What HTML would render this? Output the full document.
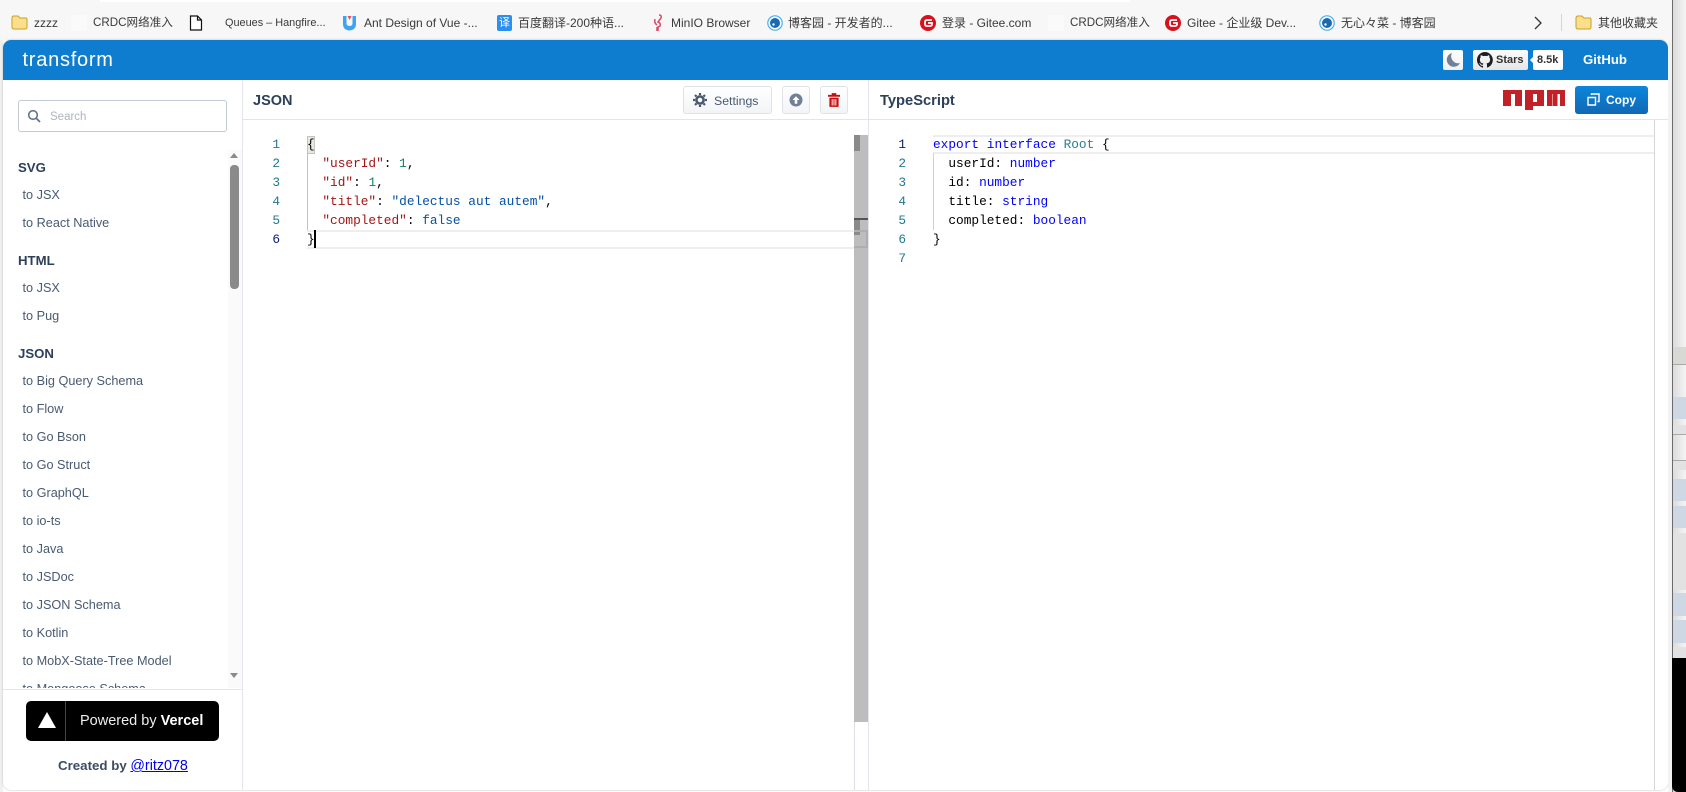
<!DOCTYPE html>
<html lang="en"><head><meta charset="utf-8"><title>transform</title>
<style>
html,body{margin:0;padding:0;width:1686px;height:792px;overflow:hidden;background:#fff;font-family:"Liberation Sans","Noto Sans CJK SC",sans-serif}
.a{position:absolute}
.t{position:absolute;white-space:nowrap}
.bm{position:absolute;top:15px;font-size:12px;line-height:16px;color:#3a3a3a;white-space:nowrap}
.h{position:absolute;left:18px;font-size:13.2px;line-height:18px;font-weight:700;color:#2d3f5b}
.l{position:absolute;left:22px;font-size:12.7px;line-height:16px;color:#4a5a72;white-space:nowrap}
.btn{position:absolute;top:86px;height:26px;border:1px solid #dfe3e9;border-radius:3px;background:linear-gradient(#fff,#f2f4f7);box-sizing:content-box}
.code{position:absolute;font-family:"Liberation Mono",monospace;font-size:12.8px;line-height:19px;white-space:pre;color:#000}
.n{position:absolute;font-family:"Liberation Mono",monospace;font-size:12.8px;line-height:19px;color:#237893;text-align:right;width:20px}
.s{color:#a31515}.d{color:#098658}.v{color:#0451a5}.k{color:#0000ff}.y{color:#267f99}
</style></head><body>
<div class="a" style="left:0;top:0;width:1672px;height:40px;background:#f7f7f7"></div>
<div class="a" style="left:100px;top:0;width:1030px;height:2px;background:#fff"></div>

<svg class="a" style="left:11px;top:15px" width="17" height="15"><path d="M1 3q0-2 2-2h4l2 2h6q1 0 1 2v7q0 2-2 2H3q-2 0-2-2z" fill="#fcdf8c" stroke="#c9a12c"/></svg>
<div class="bm" style="left:34px">zzzz</div>
<div class="a" style="left:71px;top:15px;width:16px;height:16px;background:#fafafa"></div>
<div class="bm" style="left:93px;font-size:11.6px">CRDC网络准入</div>
<svg class="a" style="left:189px;top:15px" width="14" height="16"><path d="M1.500 1h7l4 4v10h-11zM8.500 1v4h4" fill="#fff" stroke="#111" stroke-width="1.200"/></svg>
<div class="bm" style="left:225px;font-size:10.900px">Queues – Hangfire...</div>
<svg class="a" style="left:342px;top:15px" width="15" height="16"><path d="M1 1h3.500v7q0 3 3 3t3-3V1H14v8q0 6-6.500 6.500Q1 15 1 9z" fill="#3fa3f5"/><path d="M5.500 1h4L7.500 5z" fill="#e8505b"/></svg>
<div class="bm" style="left:364px;width:116px;overflow:hidden">Ant Design of Vue -...</div>
<div class="a" style="left:497px;top:15px;width:15px;height:16px;background:#2b8ff0;border-radius:2px;color:#fff;font-size:11px;line-height:16px;text-align:center">译</div>
<div class="bm" style="left:518px">百度翻译-200种语...</div>
<svg class="a" style="left:651px;top:14px" width="14" height="18"><path d="M8 1q3 0 2 3L7 8q3 1 2 4l-2 1v4M6 13v4M4 5q-1 4 2 6" fill="none" stroke="#d9486a" stroke-width="1.500"/></svg>
<div class="bm" style="left:671px">MinIO Browser</div>
<svg class="a" style="left:767px;top:15px" width="16" height="16"><circle cx="8" cy="8" r="7.200" fill="#fff" stroke="#46b1ee" stroke-width="1.200"/><circle cx="8" cy="8" r="5" fill="#1c69b3"/><circle cx="6.500" cy="9.500" r="1.200" fill="#fff"/></svg>
<div class="bm" style="left:788px">博客园 - 开发者的...</div>
<svg class="a" style="left:920px;top:15px" width="16" height="16"><circle cx="8" cy="8" r="8" fill="#d8111c"/><path d="M12 5H7q-2 0-2 2v2q0 2 2 2h3q2 0 2-2V8H8" fill="none" stroke="#fff" stroke-width="1.800"/></svg>
<div class="bm" style="left:942px">登录 - Gitee.com</div>
<div class="a" style="left:1048px;top:15px;width:16px;height:16px;background:#fafafa"></div>
<div class="bm" style="left:1070px;font-size:11.6px">CRDC网络准入</div>
<svg class="a" style="left:1165px;top:15px" width="16" height="16"><circle cx="8" cy="8" r="8" fill="#d8111c"/><path d="M12 5H7q-2 0-2 2v2q0 2 2 2h3q2 0 2-2V8H8" fill="none" stroke="#fff" stroke-width="1.800"/></svg>
<div class="bm" style="left:1187px">Gitee - 企业级 Dev...</div>
<svg class="a" style="left:1319px;top:15px" width="16" height="16"><circle cx="8" cy="8" r="7.200" fill="#fff" stroke="#46b1ee" stroke-width="1.200"/><circle cx="8" cy="8" r="5" fill="#1c69b3"/><circle cx="6.500" cy="9.500" r="1.200" fill="#fff"/></svg>
<div class="bm" style="left:1341px">无心々菜 - 博客园</div>
<svg class="a" style="left:1533px;top:16px" width="10" height="14"><path d="M2 1l6 6-6 6" fill="none" stroke="#333" stroke-width="1.300"/></svg>
<div class="a" style="left:1561px;top:14px;width:1px;height:17px;background:#d5d5d5"></div>
<svg class="a" style="left:1575px;top:15px" width="17" height="15"><path d="M1 3q0-2 2-2h4l2 2h6q1 0 1 2v7q0 2-2 2H3q-2 0-2-2z" fill="#fcdf8c" stroke="#c9a12c"/></svg>
<div class="bm" style="left:1598px">其他收藏夹</div>

<!-- page -->
<div class="a" style="left:0;top:40px;width:3px;height:752px;background:#f0f0f0"></div>
<div class="a" style="left:3px;top:40px;width:1665px;height:750px;background:#fff;border-radius:8px;overflow:hidden;box-shadow:0 0 2px #bbb">
<div class="a" style="left:0;top:0;width:1665px;height:40px;background:#0f7dcf"></div>
</div>
<div class="a" style="left:1668px;top:40px;width:4px;height:752px;background:#f2f2f2"></div>

<div class="t" style="left:22.500px;top:46px;font-size:20px;line-height:28px;color:#fff;letter-spacing:.75px">transform</div>

<div class="a" style="left:1443px;top:50px;width:20px;height:20px;background:linear-gradient(#fff,#eef0f3);border-radius:2px"></div>
<svg class="a" style="left:1445px;top:52px" width="16" height="16"><path d="M7 1A7 7 0 1 0 15 11 7 7 0 0 1 7 1z" fill="#718096"/></svg>
<div class="a" style="left:1473px;top:50px;width:55px;height:20px;background:linear-gradient(#fcfcfc,#e6e6e6);border-radius:2px"></div>
<svg class="a" style="left:1477px;top:52px" width="16" height="16" viewBox="0 0 16 16"><path fill="#1b1f23" d="M8 0a8 8 0 0 0-2.500 15.600c.4.100.5-.2.500-.4v-1.400c-2.200.5-2.700-1-2.700-1-.4-.9-.9-1.200-.9-1.200-.7-.5.100-.5.100-.5.800.1 1.200.8 1.200.8.700 1.200 1.900.9 2.300.7.100-.5.300-.9.500-1.100-1.800-.2-3.600-.9-3.600-4 0-.9.300-1.600.8-2.100-.1-.2-.4-1 .1-2.100 0 0 .7-.2 2.200.8a7.500 7.500 0 0 1 4 0c1.500-1 2.200-.8 2.200-.8.400 1.100.2 1.900.1 2.100.5.600.8 1.300.8 2.100 0 3.100-1.900 3.700-3.700 3.900.3.300.6.800.6 1.500v2.200c0 .2.100.5.600.4A8 8 0 0 0 8 0z"/></svg>
<div class="t" style="left:1496px;top:52px;font-size:11px;line-height:16px;font-weight:700;color:#333">Stars</div>
<div class="a" style="left:1533px;top:50px;width:30px;height:20px;background:#fff;border-radius:2px"></div>
<div class="a" style="left:1530px;top:57px;width:0;height:0;border:3px solid transparent;border-right:3px solid #fff;border-left:0"></div>
<div class="t" style="left:1537px;top:52px;font-size:11px;line-height:16px;font-weight:700;color:#333">8.5k</div>
<div class="t" style="left:1583px;top:51px;font-size:13.2px;line-height:18px;font-weight:700;color:#fff">GitHub</div>

<!-- sidebar -->
<div class="a" style="left:18px;top:100px;width:207px;height:30px;border:1px solid #c3cad5;border-radius:3px;background:#fff"></div>
<svg class="a" style="left:27px;top:109px" width="14" height="14"><circle cx="6" cy="6" r="4.300" fill="none" stroke="#64748b" stroke-width="1.600"/><path d="M9.300 9.300l3.700 3.700" stroke="#64748b" stroke-width="1.800"/></svg>
<div class="t" style="left:50px;top:109px;font-size:11.500px;line-height:16px;color:#adb5c0">Search</div>

<div class="a" style="left:3px;top:150px;width:239px;height:538px;overflow:hidden">
<div class="a" style="left:225px;top:0;width:14px;height:538px;background:#fafafa"></div>
<div class="a" style="left:0;top:0;width:225px;height:538px">
<div class="h" style="top:9px;left:15px">SVG</div>
<div class="l" style="top:37px;left:19.500px">to JSX</div>
<div class="l" style="top:65px;left:19.500px">to React Native</div>
<div class="h" style="top:102px;left:15px">HTML</div>
<div class="l" style="top:130px;left:19.500px">to JSX</div>
<div class="l" style="top:158px;left:19.500px">to Pug</div>
<div class="h" style="top:195px;left:15px">JSON</div>
<div class="l" style="top:223px;left:19.500px">to Big Query Schema</div>
<div class="l" style="top:251px;left:19.500px">to Flow</div>
<div class="l" style="top:279px;left:19.500px">to Go Bson</div>
<div class="l" style="top:307px;left:19.500px">to Go Struct</div>
<div class="l" style="top:335px;left:19.500px">to GraphQL</div>
<div class="l" style="top:363px;left:19.500px">to io-ts</div>
<div class="l" style="top:391px;left:19.500px">to Java</div>
<div class="l" style="top:419px;left:19.500px">to JSDoc</div>
<div class="l" style="top:447px;left:19.500px">to JSON Schema</div>
<div class="l" style="top:475px;left:19.500px">to Kotlin</div>
<div class="l" style="top:503px;left:19.500px">to MobX-State-Tree Model</div>
<div class="l" style="top:531px;left:19.500px">to Mongoose Schema</div>
</div>
</div>
<div class="a" style="left:230px;top:153px;width:0;height:0;border:4.500px solid transparent;border-bottom:5px solid #8a8a8a;border-top:0"></div>
<div class="a" style="left:230px;top:165px;width:9px;height:124px;background:#8a8a8a;border-radius:4px"></div>
<div class="a" style="left:230px;top:673px;width:0;height:0;border:4.500px solid transparent;border-top:5px solid #8a8a8a;border-bottom:0"></div>
<div class="a" style="left:3px;top:689px;width:239px;height:1px;background:#e2e6ec"></div>
<div class="a" style="left:242px;top:80px;width:1px;height:710px;background:#e2e6ec"></div>

<div class="a" style="left:26px;top:701px;width:193px;height:40px;background:#000;border-radius:5px"></div>
<div class="a" style="left:65px;top:701px;width:1px;height:40px;background:#444"></div>
<svg class="a" style="left:38px;top:712px" width="18" height="16"><path d="M9 0l9 16H0z" fill="#fff"/></svg>
<div class="t" style="left:80px;top:711px;font-size:14.500px;line-height:20px;color:#eee">Powered by <b style="color:#fff">Vercel</b></div>
<div class="t" style="left:58px;top:757px;font-size:13.300px;line-height:18px;font-weight:700;color:#3d4b63">Created by <span style="color:#0000ee;text-decoration:underline;font-weight:400;font-size:14.300px">@ritz078</span></div>

<!-- JSON panel -->
<div class="t" style="left:253px;top:91px;font-size:14.500px;line-height:20px;font-weight:700;color:#2d3f5b">JSON</div>
<div class="a" style="left:243px;top:119px;width:1425px;height:1px;background:#e2e6ec"></div>
<div class="btn" style="left:683px;width:87px"></div>
<svg class="a" style="left:693px;top:93px" width="14" height="14" viewBox="0 0 14 14"><circle cx="7" cy="7" r="3.600" fill="none" stroke="#4a5a72" stroke-width="2.600"/><path d="M7 0v14M0 7h14M2 2l10 10M12 2L2 12" stroke="#4a5a72" stroke-width="2.200" stroke-dasharray="2 10 2 0"/></svg>
<div class="t" style="left:714px;top:93px;font-size:12.300px;line-height:16px;color:#4a5a72">Settings</div>
<div class="btn" style="left:782px;width:26px"></div>
<svg class="a" style="left:789px;top:93px" width="14" height="14"><circle cx="7" cy="7" r="6.500" fill="#718096"/><path d="M7 3.200L10.500 7H8.300v3.800H5.700V7H3.500z" fill="#fff"/></svg>
<div class="btn" style="left:820px;width:26px"></div>
<svg class="a" style="left:827.500px;top:93px" width="12" height="14" viewBox="0 0 13 15"><path d="M0 2h13v2H0zM4 0h5v2H4zM1.500 5h10v10h-10z" fill="#c80f0f"/><path d="M4.500 6.500v7M6.500 6.500v7M8.500 6.500v7" stroke="#fff" stroke-width="1"/></svg>

<div class="n" style="left:260px;top:135px">1<br>2<br>3<br>4<br>5<br><span style="color:#0b216f">6</span></div>
<div class="a" style="left:307px;top:153px;width:1px;height:77px;background:#c0c0c0"></div>
<div class="a" style="top:230px;height:15px;border-top:2px solid #eee;border-bottom:2px solid #eee;left:307px;width:547px"></div>
<div class="a" style="left:307px;top:136px;width:6px;height:16px;background:#e8e8e0;border:1px solid #c4c4c4"></div>
<div class="code" style="left:307px;top:135px">{
  <span class="s">"userId"</span>: <span class="d">1</span>,
  <span class="s">"id"</span>: <span class="d">1</span>,
  <span class="s">"title"</span>: <span class="v">"delectus aut autem"</span>,
  <span class="s">"completed"</span>: <span class="v">false</span>
}</div>
<div class="a" style="left:314px;top:230px;width:2px;height:18px;background:#000"></div>

<div class="a" style="left:854px;top:135px;width:14px;height:587px;background:#bdbdbd"></div>
<div class="a" style="left:854px;top:135px;width:6px;height:16px;background:#8a8a8a"></div>
<div class="a" style="left:854px;top:218px;width:14px;height:2px;background:#555"></div>
<div class="a" style="left:854px;top:220px;width:6px;height:15px;background:#8a8a8a"></div>
<div class="a" style="left:854px;top:230px;width:14px;height:18px;box-sizing:border-box;border:2px solid #aeaeae;border-left:0"></div>
<div class="a" style="left:854px;top:722px;width:1px;height:68px;background:#dcdfe4"></div>
<div class="a" style="left:868px;top:80px;width:1px;height:710px;background:#e2e6ec"></div>

<!-- TS panel -->
<div class="t" style="left:880px;top:91px;font-size:14.700px;line-height:20px;font-weight:700;color:#2d3f5b">TypeScript</div>
<svg class="a" style="left:1503px;top:90px" width="62" height="20" viewBox="0 0 62 20"><path fill="#c12127" fill-rule="evenodd" d="M0 0h19v16h-7V4H8v12H0zM22 0h19v16H30v4h-8zM30 4v8h4V4zM44 0h18v16h-5V4h-2.500v12h-5V4H49v12h-5z"/></svg>
<div class="a" style="left:1575px;top:86px;width:73px;height:28px;border-radius:3px;background:linear-gradient(#0c86dc,#1068b4)"></div>
<svg class="a" style="left:1587px;top:93px" width="13" height="13"><path d="M1 4.500h7.500V12H1z" fill="none" stroke="#fff" stroke-width="1.400"/><path d="M4.500 2V1H12v7.500h-1.500" fill="none" stroke="#fff" stroke-width="1.400"/></svg>
<div class="t" style="left:1606px;top:92px;font-size:12px;line-height:16px;font-weight:700;color:#fff">Copy</div>

<div class="a" style="left:933px;top:135px;width:721px;height:15px;border-top:2px solid #eee;border-bottom:2px solid #eee"></div>
<div class="a" style="left:933px;top:153px;width:1px;height:77px;background:#d0d0d0"></div>
<div class="n" style="left:886px;top:135px"><span style="color:#0b216f">1</span><br>2<br>3<br>4<br>5<br>6<br>7</div>
<div class="code" style="left:933px;top:135px"><span class="k">export</span> <span class="k">interface</span> <span class="y">Root</span> {
  userId: <span class="k">number</span>
  id: <span class="k">number</span>
  title: <span class="k">string</span>
  completed: <span class="k">boolean</span>
}</div>
<div class="a" style="left:1654px;top:120px;width:1px;height:670px;background:#d6d6d6"></div>

<!-- right window edge and background window -->
<div class="a" style="left:1672px;top:0;width:1px;height:792px;background:#6b6b6b"></div>
<div class="a" style="left:1673px;top:0;width:13px;height:792px;background:linear-gradient(90deg,#dcdcdc,#f4f4f4)"></div>
<div class="a" style="left:1673px;top:347px;width:13px;height:17px;background:#d8d8d5"></div>
<div class="a" style="left:1673px;top:364px;width:13px;height:1px;background:#aaa"></div>
<div class="a" style="left:1673px;top:397px;width:13px;height:22px;background:#ced8e4"></div>
<div class="a" style="left:1673px;top:425px;width:13px;height:9px;background:#e2e2e2"></div>
<div class="a" style="left:1673px;top:434px;width:13px;height:1px;background:#aaa"></div>
<div class="a" style="left:1673px;top:460px;width:13px;height:1px;background:#aaa"></div>
<div class="a" style="left:1673px;top:461px;width:13px;height:9px;background:#e2e2e2"></div>
<div class="a" style="left:1673px;top:479px;width:13px;height:22px;background:#ced8e4"></div>
<div class="a" style="left:1673px;top:506px;width:13px;height:22px;background:#ced8e4"></div>
<div class="a" style="left:1673px;top:533px;width:13px;height:57px;background:#e2e2e2"></div>
<div class="a" style="left:1673px;top:593px;width:13px;height:23px;background:#ced8e4"></div>
<div class="a" style="left:1673px;top:620px;width:13px;height:23px;background:#ced8e4"></div>
<div class="a" style="left:1673px;top:647px;width:13px;height:11px;background:#e2e2e2"></div>
<div class="a" style="left:1672px;top:658px;width:14px;height:134px;background:#000;border-bottom-left-radius:6px"></div>
</body></html>
